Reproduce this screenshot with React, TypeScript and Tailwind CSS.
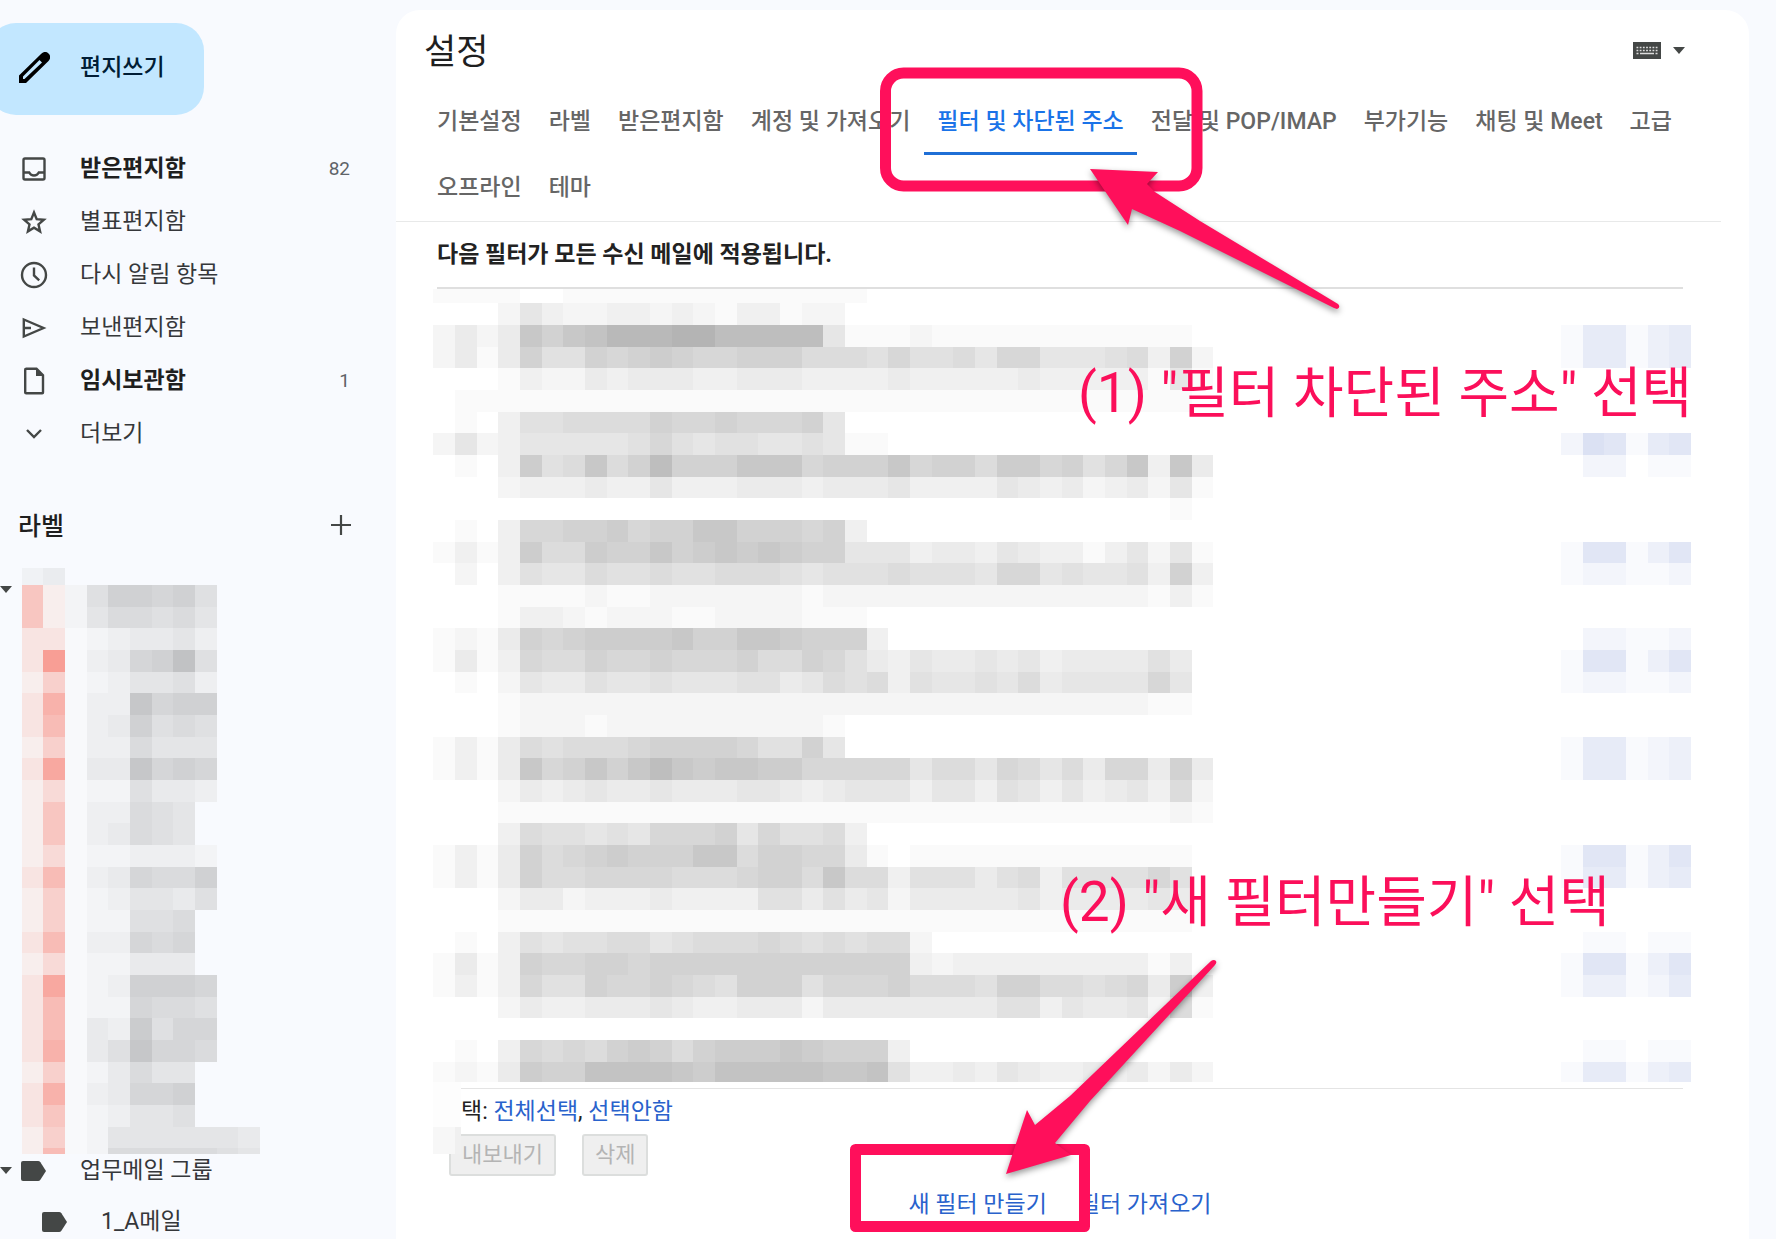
import React from "react";

// Side of one censor block is 65/3 px, edges are snapped to whole pixels.
const edge = (n: number) => Math.round((n * 65) / 3);

// Each row: one hex digit per block, the higher the darker.
const filterRows = [
  "111100111111111111110000000000000000",
  "000253223323213312200000000000000000",
  "2424b9bceeeffddddd511121111111111110",
  "2414966989a9889997776866758855567392",
  "000132243444334443333433333433333151",
  "011111111111111111111111111111111110",
  "010366777798898889500000000000000000",
  "252355555686566556511000000000000000",
  "0103a67b79d999bbb8999b8997aa8968b3b4",
  "000233343353334443444533335434234251",
  "000000000000000000000000000000000010",
  "01038899a899bb9998930000000000000000",
  "1313a77a99b9ababa9955534435433135251",
  "020365576676677765666766658856556393",
  "000111121122222221222222222222222131",
  "000133212221122221110000000000000000",
  "1214989aaaab99bba9993000000000000000",
  "141387798898889779864354454534444640",
  "010254465565556645767365565745555850",
  "000122222222222222222222222222222110",
  "000122212222222222100000000000000000",
  "131476777899998669500000000000000000",
  "1314b89b9bdbabbaa8888857758757488494",
  "000243454454445543455535536535345372",
  "000111111111111111111111111111111121",
  "000376656588895866730000000000000000",
  "13149789a999bb7998841011111111111110",
  "131497788887778997b77366646736666860",
  "000244233343333664645244444534444540",
  "000111111111111111111111111111111110",
  "010365667756777876767720000000000000",
  "141398899899999999999932333333333130",
  "13138669889876999688" + "89777699776784a3",
  "000243344454334442444444446635445271",
  "000000000000000000000000000000000000",
  "010387879a979aaaba999300000000000000",
  "1214a99ccccbacccccbbc633435433434242",
];

const actionRows: Record<number, string> = {
  15: "144134",
  16: "144134",
  20: "265145",
  21: "022011",
  25: "155135",
  26: "122112",
  29: "022112",
  30: "155135",
  31: "122112",
  34: "144123",
  35: "144123",
  39: "155135",
  40: "144134",
  43: "011011",
  44: "155135",
  45: "133124",
  48: "011011",
  49: "144134",
};

const labelColors = [
  "51", "51", "22", "29", "14", "27", "26", "14", "28", "13", "15", "15", "13", "26",
  "14", "14", "26", "13", "28", "26", "26", "27", "14", "27", "25", "14", "16",
];

const labelNames = [
  "1588785", "1466564", "0123342", "02378b5", "0124452", "022a788", "0238565", "0226444",
  "033a787", "0115332", "0226540", "0236540", "0112221", "0237668", "0124435", "0115560",
  "0227670", "0113330", "0128887", "0117665", "0329577", "035a776", "0136440", "0237780",
  "0124450", "014444443", "016666654",
];

const gray = (d: string) => {
  const v = 255 - parseInt(d, 16) * 5;
  return `rgb(${v},${v},${v})`;
};
const blue = (d: string) => {
  const k = Number(d);
  return `rgb(${255 - k * 6},${255 - k * 5},${255 - k * 2})`;
};
const pink = (d: string) => {
  const k = Number(d);
  return `rgb(248,${248 - k * 10},${248 - k * 11})`;
};
const coolGray = (d: string) => {
  const k = parseInt(d, 16) * 5;
  return `rgb(${248 - k},${249 - k},${251 - k})`;
};

interface BlocksProps {
  cells: string;
  row: number;
  col: number;
  color: (d: string) => string;
}

function Blocks({ cells, row, col, color }: BlocksProps) {
  return (
    <>
      {cells.split("").map((d, i) =>
        d === "0" ? null : (
          <rect
            key={i}
            x={edge(col + i)}
            y={edge(row)}
            width={edge(col + i + 1) - edge(col + i)}
            height={edge(row + 1) - edge(row)}
            fill={color(d)}
          />
        )
      )}
    </>
  );
}

const iconProps = {
  width: 28,
  height: 28,
  viewBox: "0 0 28 28",
  fill: "none",
  stroke: "#444746",
  strokeWidth: 2.4,
};

const icons: Record<string, React.ReactNode> = {
  inbox: (
    <svg {...iconProps}>
      <rect x="3.5" y="3.5" width="21" height="21" rx="1.5" />
      <path d="M3.5 17.5h5.7c1 2 2.6 3 4.8 3s3.8-1 4.8-3h5.7" />
    </svg>
  ),
  star: (
    <svg {...iconProps}>
      <path d="M14 4.500l2.700 6.600 7.200.6-5.400 4.700 1.600 7-6.100-3.700-6.100 3.700 1.600-7-5.400-4.700 7.200-.6z" />
    </svg>
  ),
  clock: (
    <svg {...iconProps}>
      <circle cx="14" cy="14" r="12" />
      <path d="M14 6.5v8l5.2 4.8" />
    </svg>
  ),
  send: (
    <svg {...iconProps}>
      <path d="M3.8 5.5L23.5 14 3.8 22.5zM4 14h7" />
    </svg>
  ),
  draft: (
    <svg {...iconProps}>
      <path d="M5.5 1.8h11l6.5 6.5v17.2q0 .8-.8.8H6.200q-1 0-1-.8V2.800q0-1 .8-1z" />
      <path d="M16 2v7h7z" fill="#444746" stroke="none" />
    </svg>
  ),
  more: (
    <svg {...iconProps}>
      <path d="M7 10l7 7 7-7" />
    </svg>
  ),
};

const folders = [
  { name: "받은편지함", icon: "inbox", count: 82 },
  { name: "별표편지함", icon: "star" },
  { name: "다시 알림 항목", icon: "clock" },
  { name: "보낸편지함", icon: "send" },
  { name: "임시보관함", icon: "draft", count: 1 },
  { name: "더보기", icon: "more" },
];

const tabs = [
  "기본설정",
  "라벨",
  "받은편지함",
  "계정 및 가져오기",
  "필터 및 차단된 주소",
  "전달 및 POP/IMAP",
  "부가기능",
  "채팅 및 Meet",
  "고급",
  "오프라인",
  "테마",
];

function Caret() {
  return (
    <svg width="12" height="8" viewBox="0 0 12 8" className="shrink-0">
      <path d="M0 0h12L6 7z" fill="#444746" />
    </svg>
  );
}

function LabelIcon() {
  return (
    <svg width="25" height="20" viewBox="0 0 25 20" className="shrink-0">
      <path d="M2 0h15q1.5 0 2.4 1.2L25 10l-5.6 8.8Q18.500 20 17 20H2q-2 0-2-2V2q0-2 2-2z" fill="#444746" />
    </svg>
  );
}

function Sidebar() {
  return (
    <aside className="w-[396px] shrink-0 pt-[23px] text-[23px] leading-[53px] text-[#35373a]">
      <button className="-ml-3 flex h-[92px] w-[216px] items-center rounded-[28px] bg-[#c2e7ff] pb-1 pl-[31px] font-medium text-[#001d35]">
        <svg width="31" height="31" viewBox="0 0 31 31" className="mr-[30px]">
          <path
            fillRule="evenodd"
            d="M0 31v-7.500L22 2q4-4 7.500-.5T29.500 9L7 31zM4 27h1.500L23 10.500 20.500 8 4 24.500z"
            fill="#000"
          />
        </svg>
        편지쓰기
      </button>
      <nav className="mt-[27px]">
        {folders.map((folder) => (
          <a key={folder.name} href="#" className="flex h-[53px] items-center pl-5 pr-[46px]">
            {icons[folder.icon]}
            <span className={folder.count ? "ml-8 font-bold text-[#1f1f1f]" : "ml-8"}>
              {folder.name}
            </span>
            {folder.count && <span className="ml-auto text-[19px] text-[#5f6368]">{folder.count}</span>}
          </a>
        ))}
      </nav>
      <div className="mt-10 flex h-[53px] items-center justify-between pl-[18px] pr-[45px]">
        <h2 className="text-[25px] font-medium text-[#1f1f1f]">라벨</h2>
        <button aria-label="새 라벨 만들기" className="pb-1">
          <svg width="20" height="20" viewBox="0 0 20 20">
            <path d="M10 0v20M0 10h20" stroke="#444746" strokeWidth="2.2" />
          </svg>
        </button>
      </div>
      <div className="mt-[15px] flex">
        <div className="w-[22px] pt-[18px]">
          <Caret />
        </div>
        <svg width="238" height="586" viewBox="22 568 238 586" shapeRendering="crispEdges">
          <rect x="22" y="568" width="21" height="17" fill="#f0f2f5" />
          <rect x="43" y="568" width="22" height="17" fill="#eaecef" />
          <rect x="65" y="585" width="22" height="569" fill="#f8f9fb" />
          {labelColors.map((cells, i) => (
            <Blocks key={i} cells={cells} row={27 + i} col={1} color={pink} />
          ))}
          {labelNames.map((cells, i) => (
            <Blocks key={i} cells={cells} row={27 + i} col={3} color={coolGray} />
          ))}
        </svg>
      </div>
      <a href="#" className="-mt-[10px] flex h-[53px] items-center">
        <Caret />
        <span className="ml-[9px] mr-[34px]">
          <LabelIcon />
        </span>
        업무메일 그룹
      </a>
      <a href="#" className="flex h-[42px] items-center pl-[42px] pt-2 leading-[34px]">
        <LabelIcon />
        <span className="ml-[34px]">1_A메일</span>
      </a>
    </aside>
  );
}

function Settings() {
  return (
    <main className="mr-[27px] mt-[10px] min-w-0 grow rounded-t-[24px] bg-white">
      <header className="flex items-start justify-between pl-7 pr-16 pt-[18px]">
        <h1 className="text-[35px] leading-[50px] text-[#1f1f1f]">설정</h1>
        <button className="mt-[14px] flex items-center gap-3" aria-label="입력 도구">
          <svg width="28" height="17" viewBox="0 0 28 17">
            <rect width="28" height="17" fill="#444746" />
            <path d="M3.500 5.500h22M3.500 8.500h22" stroke="#ddd" strokeWidth="1.600" strokeDasharray="1.800 1.400" />
            <path d="M3.500 11.500h2M7 11.500h14M22.500 11.500h2" stroke="#ddd" strokeWidth="1.600" />
          </svg>
          <Caret />
        </button>
      </header>
      <nav className="mr-7 flex flex-wrap gap-x-px border-b border-[#e8e9e9] pl-7 pt-[11px] text-[23px] font-medium text-[#666]">
        {tabs.map((tab, i) => (
          <a
            key={tab}
            href="#"
            className={
              i === 4
                ? "flex h-[66px] items-center border-y-[3px] border-t-transparent border-b-[#1f6fd6] px-[13px] text-[#1a73e8]"
                : "flex h-[66px] items-center px-[13px]"
            }
          >
            {tab}
          </a>
        ))}
      </nav>
      <section className="px-[41px] text-[23px]">
        <h2 className="mr-[25px] border-b-2 border-[#dfdfdf] py-4 font-bold leading-[33px] text-[#222]">
          다음 필터가 모든 수신 메일에 적용됩니다.
        </h2>
        <div className="-ml-1 flex justify-between">
          <svg width="780" height="793" viewBox="433 289 780 793" shapeRendering="crispEdges">
            {filterRows.map((cells, i) => (
              <Blocks key={i} cells={cells} row={13 + i} col={20} color={gray} />
            ))}
          </svg>
          <svg width="136" height="793" viewBox="1560 289 136 793" shapeRendering="crispEdges" className="mr-[11px]">
            {Object.entries(actionRows).map(([row, cells]) => (
              <Blocks key={row} cells={cells} row={Number(row)} col={72} color={blue} />
            ))}
          </svg>
        </div>
        <div className="ml-6 mr-[25px] mt-[6px] border-t border-[#e4e4e4] pt-[6px] leading-[34px] text-[#222]">
          택:{" "}
          <a href="#" className="text-[#2962cc]">
            전체선택
          </a>
          ,{" "}
          <a href="#" className="text-[#2962cc]">
            선택안함
          </a>
        </div>
        <div className="relative ml-[12px] mt-[5px] flex gap-[26px] text-[22px] leading-[38px] text-[#b4b4b4]">
          <button disabled className="rounded-[3px] border-2 border-[#dcdedd] bg-[#efefef] px-[11px]">
            내보내기
          </button>
          <button disabled className="rounded-[3px] border-2 border-[#dcdedd] bg-[#efefef] px-[11px]">
            삭제
          </button>
          <svg
            width="28"
            height="72"
            viewBox="0 0 28 72"
            className="absolute -left-4 -top-[52px]"
            shapeRendering="crispEdges"
          >
            <path d="M0 0h28v72H0z" fill="#fdfdfd" />
            <path d="M0 45h22v27H0z" fill="#f7f7f7" />
            <path d="M22 45h6v27h-6z" fill="#f0f0f0" />
          </svg>
        </div>
        <div className="mt-3 flex justify-center gap-8 pr-[25px] leading-[34px] text-[#2962cc]">
          <a href="#">새 필터 만들기</a>
          <a href="#">필터 가져오기</a>
        </div>
      </section>
    </main>
  );
}

// Hand-placed tutorial marks that lie over the page.
function Annotations() {
  return (
    <div className="pointer-events-none absolute left-0 top-0 text-[55px] leading-[60px] text-[#fb0f5a]">
      <svg width="1776" height="1239" viewBox="0 0 1776 1239" className="block max-w-none">
        <g fill="none" stroke="#ff0f5b" strokeWidth="11">
          <rect x="885.5" y="73" width="311.5" height="113" rx="18" />
          <rect x="855.5" y="1149.500" width="229" height="77" strokeLinejoin="round" />
        </g>
        <g fill="#ff0f5b" className="drop-shadow-[0_3px_3px_rgba(0,0,0,0.4)]">
          <path d="M1090 169L1158 172 1147 184 1155 192 1200 221 1285 272 1338 304Q1341 307 1337 309L1334 308 1180 231 1132 209 1128 225z" />
          <path d="M1006 1174L1027 1110 1035 1125 1070 1096 1211 961Q1214 959 1216 961 1217 963 1215 965L1090 1101 1055 1143 1071 1155z" />
        </g>
      </svg>
      <p className="absolute left-[1078px] top-[363px] whitespace-nowrap">(1) "필터 차단된 주소" 선택</p>
      <p className="absolute left-[1060px] top-[872px] whitespace-nowrap">(2) "새 필터만들기" 선택</p>
    </div>
  );
}

export default function App() {
  return (
    <div className="relative flex min-h-screen overflow-hidden bg-[#f8fafe] font-[Roboto,'Noto_Sans_CJK_KR',sans-serif]">
      <Sidebar />
      <Settings />
      <Annotations />
    </div>
  );
}
